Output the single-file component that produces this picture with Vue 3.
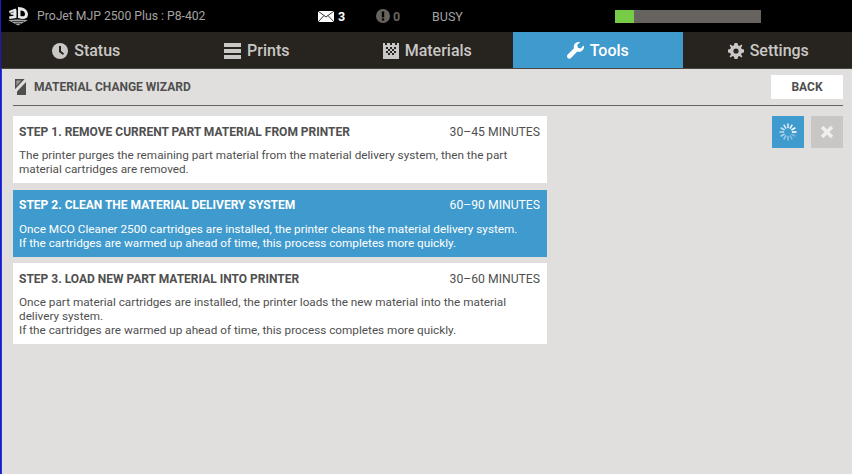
<script setup>
const tabs = [
  { name: 'Status', icon: 'clock' },
  { name: 'Prints', icon: 'list' },
  { name: 'Materials', icon: 'checker' },
  { name: 'Tools', icon: 'wrench', active: true },
  { name: 'Settings', icon: 'gear' }
]

const steps = [
  {
    title: 'STEP 1. REMOVE CURRENT PART MATERIAL FROM PRINTER',
    time: '30–45 MINUTES',
    lines: ['The printer purges the remaining part material from the material delivery system, then the part material cartridges are removed.']
  },
  {
    title: 'STEP 2. CLEAN THE MATERIAL DELIVERY SYSTEM',
    time: '60–90 MINUTES',
    active: true,
    lines: [
      'Once MCO Cleaner 2500 cartridges are installed, the printer cleans the material delivery system.',
      'If the cartridges are warmed up ahead of time, this process completes more quickly.'
    ]
  },
  {
    title: 'STEP 3. LOAD NEW PART MATERIAL INTO PRINTER',
    time: '30–60 MINUTES',
    lines: [
      'Once part material cartridges are installed, the printer loads the new material into the material delivery system.',
      'If the cartridges are warmed up ahead of time, this process completes more quickly.'
    ]
  }
]

const spokes = Array.from({ length: 12 }, (_, i) => ({
  angle: i * 30,
  opacity: 0.3 + ((i + 8) % 12) * 0.065
}))
</script>

<template>
  <div class="screen">
    <header class="topbar">
      <svg class="logo" viewBox="0 0 22 20" width="22" height="20">
        <path d="M2 5 L8.5 2.5 L9.5 4 L9.5 12 L2.5 13 L2 10.5 L6.5 9.8 L6.5 8.8 L3.5 8.6 L3.5 6.8 L6.5 6.4 L6.3 5.6 L2.5 7 Z" fill="#e8e8e8" />
        <path fill-rule="evenodd" d="M11 1 C17 1 21 4 21 8.5 C21 11.5 19 13 15 13 L11 12 Z M13.5 4.5 L13.5 10 C16.5 10.8 18 10 18 8.2 C18 6 16.5 4.6 13.5 4.5 Z" fill="#e8e8e8" />
        <path d="M1 14 L10 13.5 L21 14 L11 19.5 Z" fill="#a8a8a8" />
        <path d="M5 15.5 L17 15.5 M8 17.3 L14 17.3" stroke="#000" stroke-width="0.6" />
      </svg>
      <span class="printer">ProJet MJP 2500 Plus : P8-402</span>
      <svg class="mail" viewBox="0 0 16 11" width="16" height="11">
        <rect width="16" height="11" fill="#fff" />
        <path d="M0 0 L8 6 L16 0 M0 11 L6 4.5 M16 11 L10 4.5" fill="none" stroke="#000" stroke-width="0.8" />
      </svg>
      <span class="mail-count">3</span>
      <svg class="alert" viewBox="0 0 14 14" width="14" height="14">
        <circle cx="7" cy="7" r="7" fill="#67635f" />
        <rect x="5.8" y="2.5" width="2.4" height="5.8" fill="#000" />
        <rect x="5.8" y="9.4" width="2.4" height="2.2" fill="#000" />
      </svg>
      <span class="alert-count">0</span>
      <span class="state">BUSY</span>
      <div class="progress"><div class="progress-fill" style="width: 13%"></div></div>
    </header>

    <nav class="tabs">
      <div v-for="tab in tabs" :key="tab.name" class="tab" :class="{ active: tab.active }">
        <svg v-if="tab.icon === 'clock'" viewBox="0 0 16 16" width="16" height="16">
          <circle cx="8" cy="8" r="8" fill="currentColor" />
          <path d="M7 3 H9 V8 L12 10.5 L11 12 L7 9 Z" fill="#27231e" />
        </svg>
        <svg v-else-if="tab.icon === 'list'" viewBox="0 0 17 16" width="17" height="16">
          <path d="M0 0 H17 V4 H0 Z M0 6 H17 V10 H0 Z M0 12 H17 V16 H0 Z" fill="currentColor" />
        </svg>
        <svg v-else-if="tab.icon === 'checker'" viewBox="0 0 16 16" width="16" height="16">
          <path d="M0 0 H2 V2 H4 V0 H7 V2 H9 V0 H12 V2 H14 V0 H16 V16 H0 Z" fill="currentColor" />
          <path d="M3 4 H5 V6 H3 Z M7 4 H9 V6 H7 Z M11 4 H13 V6 H11 Z M5 6 H7 V8 H5 Z M9 6 H11 V8 H9 Z M3 8 H5 V10 H3 Z M7 8 H9 V10 H7 Z M11 8 H13 V10 H11 Z M5 10 H7 V12 H5 Z M9 10 H11 V12 H9 Z" fill="#27231e" />
        </svg>
        <svg v-else-if="tab.icon === 'wrench'" viewBox="0 0 17 17" width="17" height="17">
          <path d="M16.6 3.6 L13.6 6.4 L10.9 5.7 L10.2 3.1 L13.1 0.3 C10.6 -0.5 7.6 1 6.9 3.7 C6.7 4.6 6.7 5.5 7 6.3 L0.7 12.6 C-0.2 13.5 -0.2 15 0.7 15.9 C1.6 16.9 3.1 16.9 4 16 L10.4 9.6 C13.3 10.5 16.2 8.6 16.9 5.9 C17.1 5.1 17 4.3 16.6 3.6 Z" fill="currentColor" />
        </svg>
        <svg v-else viewBox="0 0 16 16" width="16" height="16">
          <path fill-rule="evenodd" d="M6.5 0 H9.5 L10 2.3 L11.4 2.9 L13.4 1.6 L14.4 2.6 L13.1 4.6 L13.7 6 L16 6.5 V9.5 L13.7 10 L13.1 11.4 L14.4 13.4 L13.4 14.4 L11.4 13.1 L10 13.7 L9.5 16 H6.5 L6 13.7 L4.6 13.1 L2.6 14.4 L1.6 13.4 L2.9 11.4 L2.3 10 L0 9.5 V6.5 L2.3 6 L2.9 4.6 L1.6 2.6 L2.6 1.6 L4.6 2.9 L6 2.3 Z M8 5.4 A2.6 2.6 0 1 0 8 10.6 A2.6 2.6 0 1 0 8 5.4 Z" fill="currentColor" />
        </svg>
        <span>{{ tab.name }}</span>
      </div>
    </nav>

    <main class="content">
      <div class="wizard-head">
        <svg viewBox="0 0 12 16" width="12" height="16">
          <path d="M0.7 0.7 H8 L0.7 8.5 Z" fill="#9a9997" stroke="#4f4f4f" stroke-width="1.4" />
          <path d="M11 3 V16 H2 V12.5 Z" fill="#4f4f4f" />
        </svg>
        <span class="wizard-title">MATERIAL CHANGE WIZARD</span>
        <button class="back">BACK</button>
      </div>

      <div class="body">
        <div class="steps">
          <section v-for="step in steps" :key="step.title" class="step" :class="{ active: step.active }">
            <div class="step-head">
              <span class="step-title">{{ step.title }}</span>
              <span class="step-time">{{ step.time }}</span>
            </div>
            <p v-for="line in step.lines" :key="line">{{ line }}</p>
          </section>
        </div>
        <div class="actions">
          <div class="action busy">
            <svg viewBox="0 0 20 20" width="20" height="20">
              <rect v-for="s in spokes" :key="s.angle" x="9.2" y="1.5" width="1.6" height="4.6" fill="#fff"
                :opacity="s.opacity" :transform="`rotate(${s.angle} 10 10)`" />
            </svg>
          </div>
          <div class="action cancel">
            <svg viewBox="0 0 14 14" width="14" height="14">
              <path d="M2 2 L12 12 M12 2 L2 12" stroke="#f0efed" stroke-width="3.4" fill="none" />
            </svg>
          </div>
        </div>
      </div>
    </main>
  </div>
</template>

<style>
html, body {
  margin: 0;
  background: #e0dfdd;
}
</style>

<style scoped>
.screen {
  width: 852px;
  height: 474px;
  box-sizing: border-box;
  display: flex;
  flex-direction: column;
  border-left: 1px solid #1a1ac8;
  font-family: Roboto, "Liberation Sans", sans-serif;
  overflow: hidden;
}

.topbar {
  height: 32px;
  margin-left: -1px;
  background: #000;
  display: flex;
  align-items: center;
  flex-shrink: 0;
}

.logo {
  margin-left: 7px;
  margin-right: 8px;
}

.printer {
  width: 281px;
  font-size: 12.2px;
  color: #a4a2a0;
}

.mail-count {
  margin-left: 4px;
  width: 38px;
  font-size: 12.5px;
  font-weight: 700;
  color: #fff;
}

.alert-count {
  margin-left: 3px;
  width: 39px;
  font-size: 12.5px;
  font-weight: 700;
  color: #67635f;
}

.state {
  width: 183px;
  font-size: 12.5px;
  color: #a4a2a0;
}

.progress {
  width: 146px;
  height: 13px;
  background: #67635f;
}

.progress-fill {
  height: 100%;
  background: #76cb47;
}

.tabs {
  height: 37px;
  margin-left: -1px;
  display: grid;
  grid-template-columns: repeat(5, 170.5px);
  background: #27231e;
  border-left: 1px solid #000;
  border-bottom: 1px solid #4a4743;
  box-sizing: border-box;
  flex-shrink: 0;
}

.tab {
  display: flex;
  align-items: center;
  justify-content: center;
  gap: 6px;
  padding-top: 1px;
  font-size: 16px;
  font-weight: 500;
  color: #c9c8c6;
}

.tab.active {
  background: #3f9acd;
  color: #fff;
}

.content {
  flex: 1;
  background: #e0dfdd;
  border-left: 1px solid #2a3ae0;
  padding: 6px 9px 0 11px;
}

.wizard-head {
  height: 24px;
  display: flex;
  align-items: center;
  border-bottom: 1px solid #66635f;
  padding-left: 2px;
  padding-bottom: 6px;
}

.wizard-title {
  flex: 1;
  margin-left: 7px;
  font-size: 12px;
  font-weight: 700;
  color: #4f4f4f;
}

.back {
  width: 72px;
  height: 24px;
  border: none;
  padding: 0;
  background: #fff;
  font-family: inherit;
  font-size: 12px;
  font-weight: 700;
  color: #4f4f4f;
}

.body {
  display: flex;
  justify-content: space-between;
  padding-top: 10px;
}

.steps {
  width: 534px;
  display: flex;
  flex-direction: column;
  gap: 6.5px;
}

.step {
  background: #fff;
  padding: 8px 7px 7px 6px;
  color: #4f4f4f;
}

.step.active {
  background: #3f9acd;
  color: #fff;
}

.step-head {
  display: flex;
  justify-content: space-between;
  align-items: center;
  margin-bottom: 9px;
  height: 15px;
}

.step-title {
  font-size: 12px;
  font-weight: 700;
}

.step-time {
  font-size: 12.2px;
}

.step p {
  margin: 0;
  font-size: 11.75px;
  line-height: 14px;
}

.actions {
  display: flex;
  gap: 7px;
}

.action {
  width: 32px;
  height: 32px;
  display: flex;
  align-items: center;
  justify-content: center;
}

.busy {
  background: #3f9acd;
}

.cancel {
  background: #c8c7c5;
}
</style>
